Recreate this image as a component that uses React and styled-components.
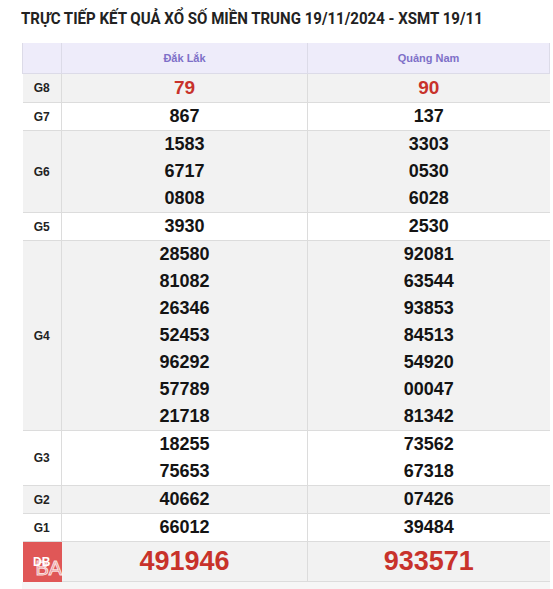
import { createGlobalStyle, styled } from "styled-components";

const GlobalStyle = createGlobalStyle`
  body {
    margin: 0;
    background: #fff;
    font-family: "Liberation Sans", Arial, sans-serif;
  }
`;

const Page = styled.div`
  padding: 8px 0 0 21px;
  width: 553px;
  box-sizing: border-box;
`;

const Title = styled.h2`
  margin: 0 0 15px;
  font-family: Roboto, "Noto Sans", sans-serif;
  font-size: 17px;
  line-height: 20px;
  font-weight: 700;
  color: #222;
  white-space: nowrap;
  transform: scaleX(0.885);
  transform-origin: left center;
`;

const Table = styled.table`
  width: 528px;
  border-collapse: collapse;
  table-layout: fixed;
  margin-left: 1px;
`;

const HeadCell = styled.th`
  height: 30px;
  background: #eeecfa;
  border: 1px solid #dcdbe8;
  border-top: none;
  color: #7e70c8;
  font-size: 11px;
  font-weight: 700;
  text-align: center;
  padding: 0;
`;

const Row = styled.tr`
  background: ${({ $alt }) => ($alt ? "#f2f2f2" : "#fff")};
`;

const Label = styled.td`
  padding: 0;
  border: 1px solid #dcdcdc;
  border-left: none;
  text-align: center;
  font-size: 12px;
  font-weight: 700;
  color: #222;
  position: relative;
  ${({ $special }) => $special && "background: #e05757; color: #fff; border-color: #e05757;"}
`;

const Cell = styled.td`
  padding: 0;
  border: 1px solid #dcdcdc;
  border-right: none;
  text-align: center;
`;

const Num = styled.div`
  font-size: ${({ $size }) => $size || 18}px;
  line-height: ${({ $lh }) => $lh || 27}px;
  font-weight: 700;
  color: ${({ $red }) => ($red ? "#c8322b" : "#141414")};
`;

const Watermark = styled.span`
  position: absolute;
  left: 13px;
  top: 16px;
  z-index: 2;
  font-size: 20px;
  line-height: 20px;
  font-weight: 400;
  color: rgba(255, 255, 255, 0.25);
  -webkit-text-stroke: 1px rgba(255, 255, 255, 0.8);
  pointer-events: none;
  white-space: nowrap;
`;

const Footer = styled.div`
  margin-left: 1px;
  width: 528px;
  height: 12px;
  background: #f6f6f6;
`;

const rows = [
  { g: "G8", a: ["79"], b: ["90"], red: true, size: 19, lh: 28, alt: true },
  { g: "G7", a: ["867"], b: ["137"] },
  { g: "G6", a: ["1583", "6717", "0808"], b: ["3303", "0530", "6028"], alt: true },
  { g: "G5", a: ["3930"], b: ["2530"] },
  {
    g: "G4",
    a: ["28580", "81082", "26346", "52453", "96292", "57789", "21718"],
    b: ["92081", "63544", "93853", "84513", "54920", "00047", "81342"],
    alt: true,
  },
  { g: "G3", a: ["18255", "75653"], b: ["73562", "67318"] },
  { g: "G2", a: ["40662"], b: ["07426"], alt: true },
  { g: "G1", a: ["66012"], b: ["39484"] },
];

function NumList({ items, red, size, lh }) {
  return items.map((n) => (
    <Num key={n} $red={red} $size={size} $lh={lh}>
      {n}
    </Num>
  ));
}

export default function App() {
  return (
    <Page>
      <GlobalStyle />
      <Title>TRỰC TIẾP KẾT QUẢ XỔ SỐ MIỀN TRUNG 19/11/2024 - XSMT 19/11</Title>
      <Table>
        <colgroup>
          <col style={{ width: 39 }} />
          <col style={{ width: 246 }} />
          <col />
        </colgroup>
        <thead>
          <tr>
            <HeadCell />
            <HeadCell>Đắk Lắk</HeadCell>
            <HeadCell>Quảng Nam</HeadCell>
          </tr>
        </thead>
        <tbody>
          {rows.map((r) => (
            <Row key={r.g} $alt={r.alt}>
              <Label>{r.g}</Label>
              <Cell>
                <NumList items={r.a} red={r.red} size={r.size} lh={r.lh} />
              </Cell>
              <Cell>
                <NumList items={r.b} red={r.red} size={r.size} lh={r.lh} />
              </Cell>
            </Row>
          ))}
          <Row $alt>
            <Label $special>
              DB
              <Watermark>BA</Watermark>
            </Label>
            <Cell>
              <Num $red $size={27} $lh={39}>
                491946
              </Num>
            </Cell>
            <Cell>
              <Num $red $size={27} $lh={39}>
                933571
              </Num>
            </Cell>
          </Row>
        </tbody>
      </Table>
      <Footer />
    </Page>
  );
}
